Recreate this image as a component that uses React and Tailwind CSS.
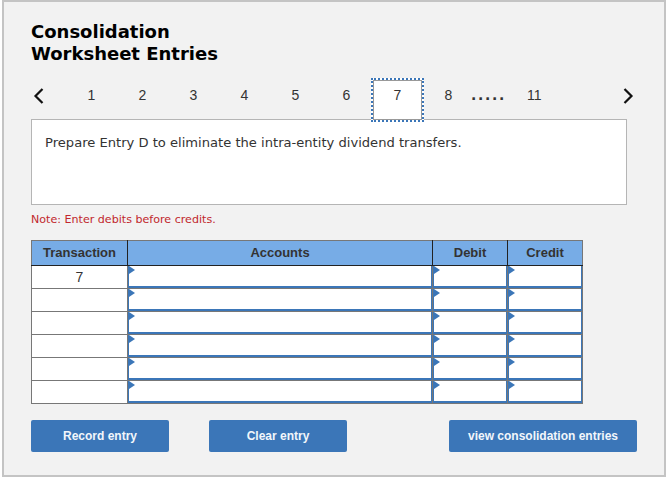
import { useState } from "react";

const pages = ["1", "2", "3", "4", "5", "6", "7", "8"];
const rows = ["7", "", "", "", "", ""];

const Chevron = ({ flip }) => (
  <svg width="12" height="18" viewBox="0 0 12 18" className={flip ? "rotate-180" : ""}>
    <path d="M9.5 2 L2.5 9 L9.5 16" fill="none" stroke="#111" strokeWidth="2.2" />
  </svg>
);

// input cell, blue box with the small corner marker
const EntryCell = () => (
  <td className="relative p-0 h-[23px] border border-[#777]">
    <div className="h-full border-x border-b-2 border-[#3b76b8] bg-white"></div>
    <span className="absolute left-[1px] top-0 w-0 h-0 border-y-[4px] border-y-transparent border-l-[6px] border-l-[#3b76b8]"></span>
  </td>
);

const App = () => {
  const [current] = useState("7");
  return (
    <div className="w-[670px] h-[484px] bg-white font-['DejaVu_Sans',sans-serif] pl-[2px] pr-[4px]">
      <section className="h-[477px] bg-[#f2f2f2] border-2 border-[#c4c4c4] pt-[19px] pl-[27px] pr-[27px]">
        <h2 className="font-bold text-[18px] leading-[22px] text-black">
          Consolidation
          <br />
          Worksheet Entries
        </h2>

        {/* pagination */}
        <div className="flex items-center h-[44px] pb-[9px] mt-[13px] relative z-10">
          <span className="w-[14px] ml-[1px] flex justify-center">
            <Chevron />
          </span>
          <div className="flex ml-[20px] font-['Liberation_Sans',sans-serif] text-[14px] text-[#333]">
            {pages.map((p) => (
              <span key={p} className="relative w-[51px] h-[35px] flex items-center justify-center">
                {p === current && (
                  <span className="absolute -left-[1px] -right-[1px] top-0 h-[44px] bg-white border-[2px] border-dotted border-[#3b76b8] outline outline-1 -outline-offset-[3px] outline-[#999]"></span>
                )}
                <span className="relative">{p}</span>
              </span>
            ))}
          </div>
          <span className="-ml-[3px] font-bold text-[14px] tracking-[1.7px] text-[#333]">.....</span>
          <span className="ml-[21px] font-['Liberation_Sans',sans-serif] text-[14px] text-[#333]">11</span>
          <span className="ml-auto mr-[2px] w-[14px] flex justify-center">
            <Chevron flip />
          </span>
        </div>

        {/* question */}
        <div className="h-[86px] w-[596px] -mt-[3px] bg-white border border-[#b5b5b5] pt-[14px] pl-[13px] text-[13.1px] leading-[18px] text-[#333]">
          Prepare Entry D to eliminate the intra-entity dividend transfers.
        </div>
        <p className="mt-[7px] text-[11.1px] leading-[15px] text-[#c1272d]">Note: Enter debits before credits.</p>

        {/* worksheet table */}
        <table className="mt-[13px] w-[551px] table-fixed border-collapse font-['Liberation_Sans',sans-serif] text-[14px] text-[#333]">
          <thead>
            <tr className="h-[25px] bg-[#77ace6] text-[13px] font-bold">
              <th className="w-[96px] p-0 border border-[#777] border-r-[#222] border-b-[#222]">Transaction</th>
              <th className="w-[305px] p-0 border border-[#777] border-r-[#222] border-b-[#222]">Accounts</th>
              <th className="w-[75px] p-0 border border-[#777] border-r-[#222] border-b-[#222]">Debit</th>
              <th className="w-[75px] p-0 border border-[#777] border-b-[#222]">Credit</th>
            </tr>
          </thead>
          <tbody>
            {rows.map((r, i) => (
              <tr key={i} className="h-[23px]">
                <td className="p-0 bg-white border border-[#777] text-center">{r}</td>
                <EntryCell />
                <EntryCell />
                <EntryCell />
              </tr>
            ))}
          </tbody>
        </table>

        {/* buttons */}
        <div className="flex mt-[16px] font-['Liberation_Sans',sans-serif] text-[12px] font-bold text-[#f2f6fb]">
          <button className="w-[138px] h-[32px] rounded-[2px] bg-[#3b76b8]">Record entry</button>
          <button className="w-[138px] h-[32px] ml-[40px] rounded-[2px] bg-[#3b76b8]">Clear entry</button>
          <button className="w-[188px] h-[32px] ml-[102px] rounded-[2px] bg-[#3b76b8]">view consolidation entries</button>
        </div>
      </section>
    </div>
  );
};

export default App;
